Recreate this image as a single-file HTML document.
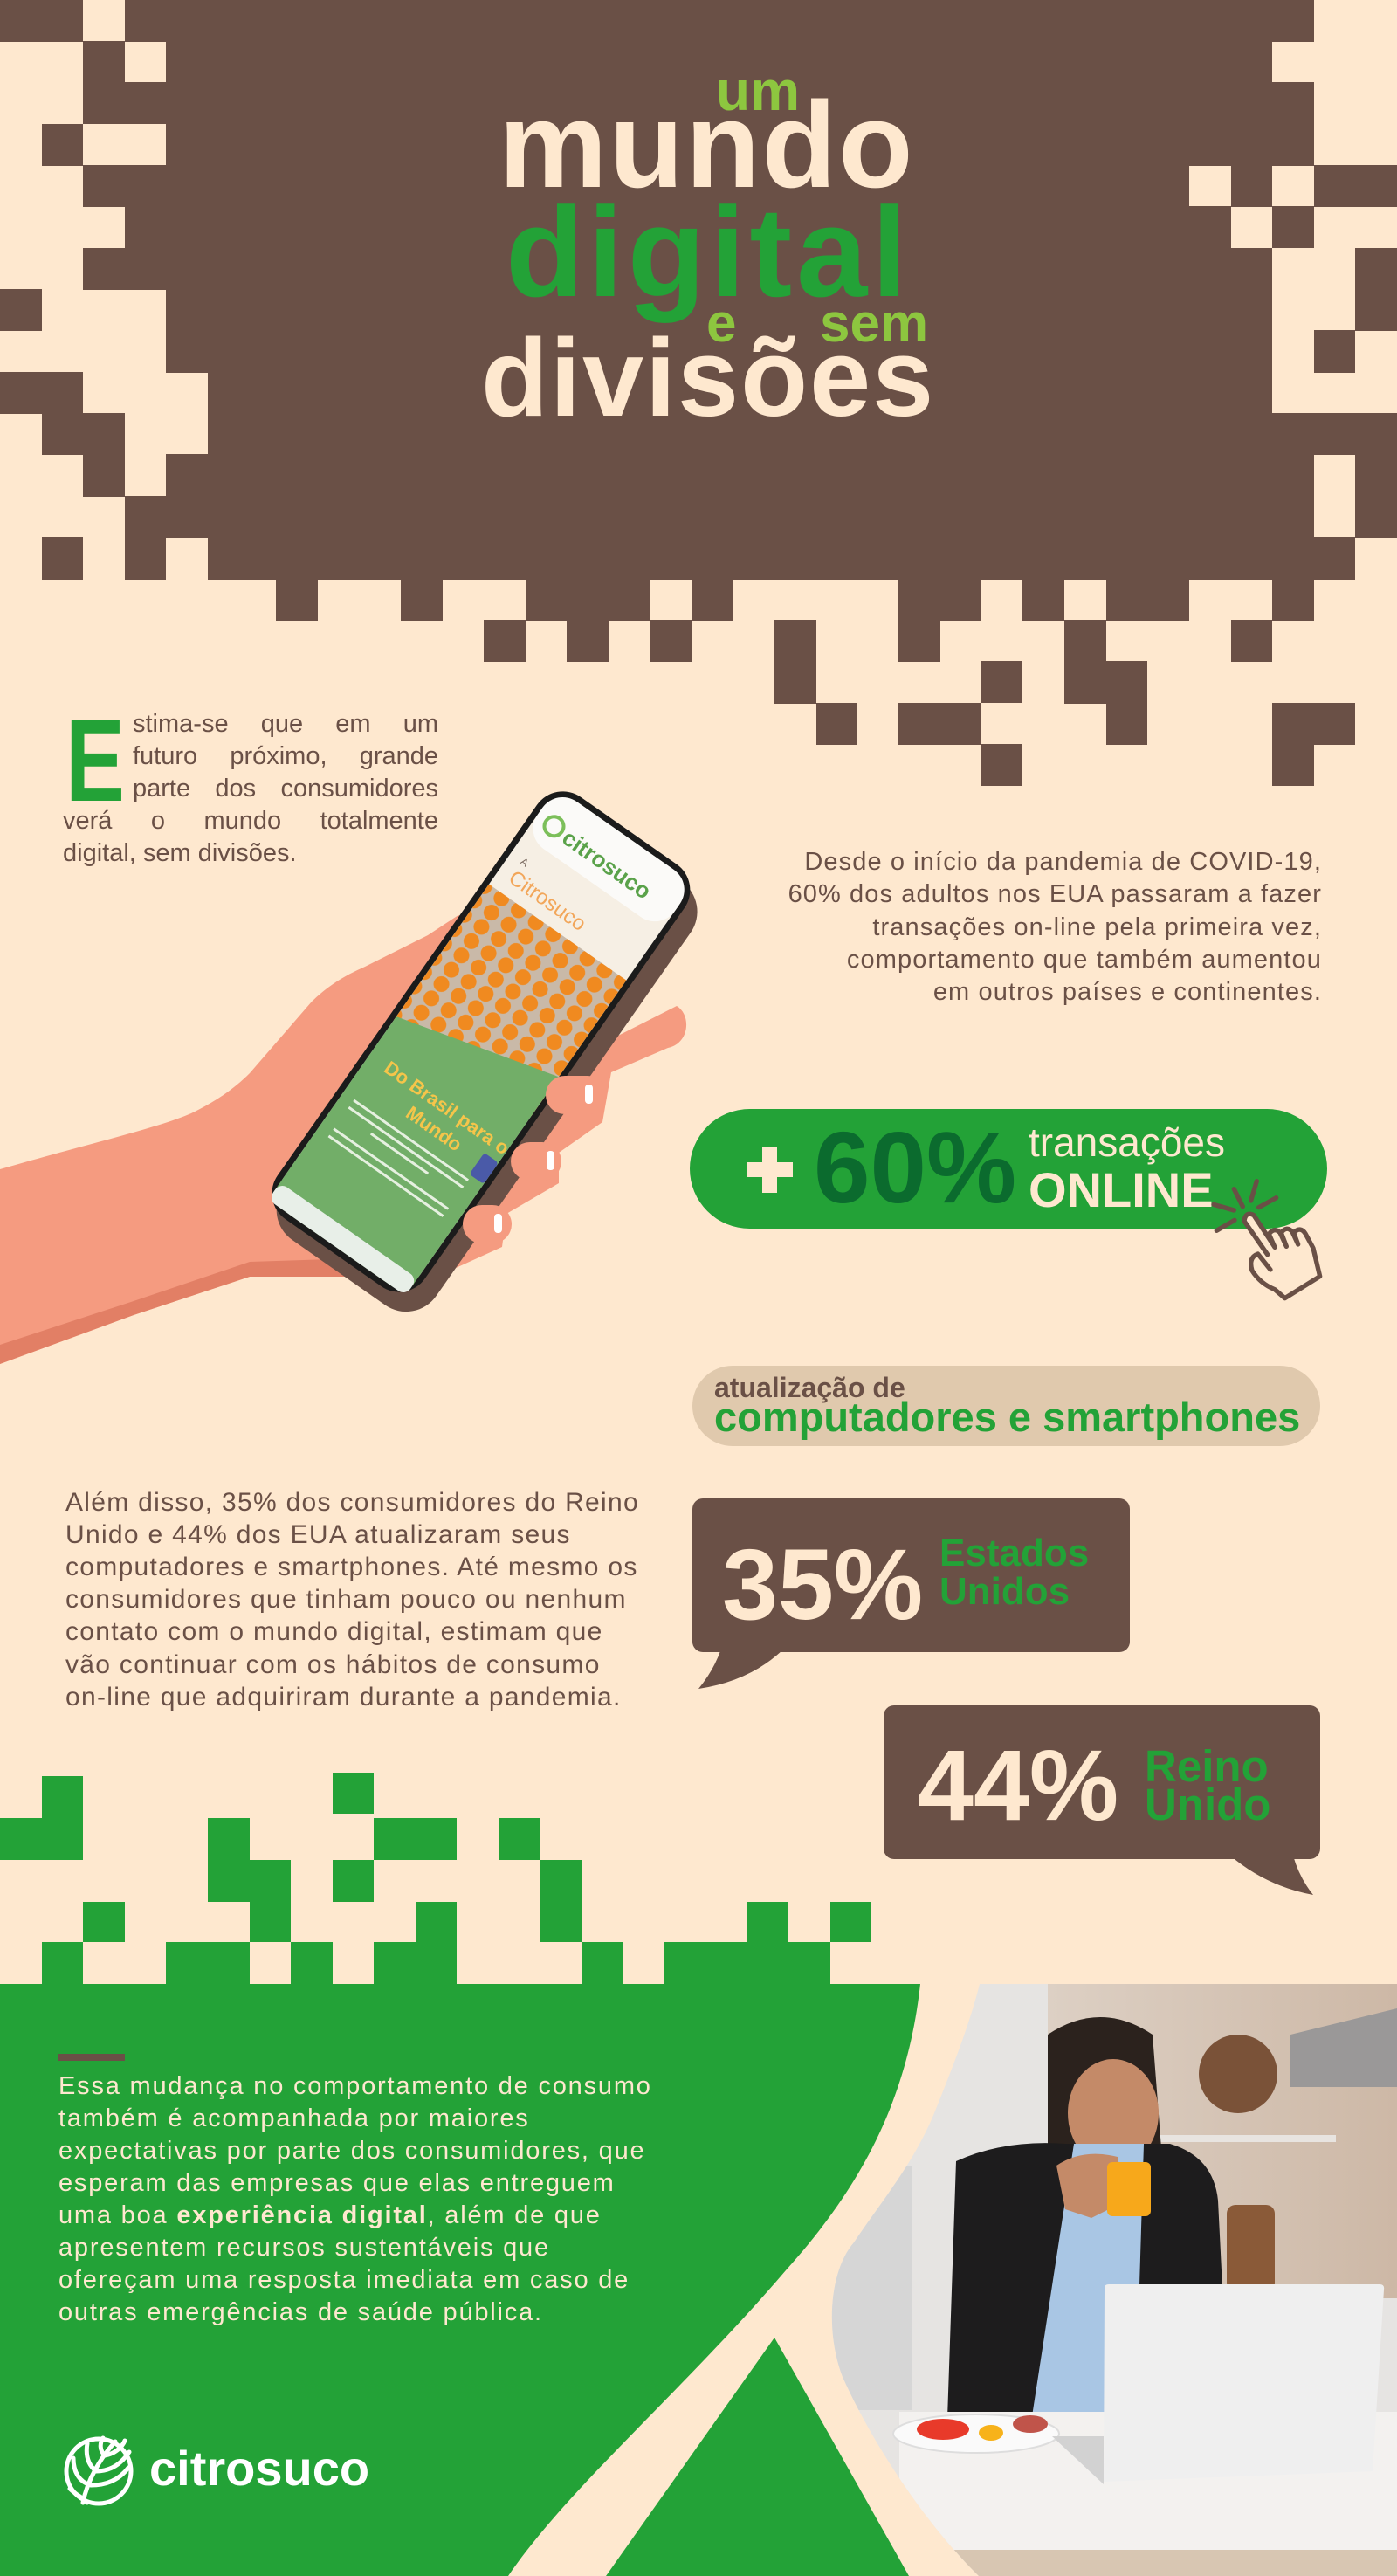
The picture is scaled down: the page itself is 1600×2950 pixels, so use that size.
<!DOCTYPE html>
<html><head><meta charset="utf-8">
<style>
*{margin:0;padding:0;box-sizing:border-box}
html,body{width:1600px;height:2950px;overflow:hidden;background:#fee8cf}
body{position:relative;font-family:"Liberation Sans",sans-serif}
.a{position:absolute;white-space:nowrap}
.t{font-weight:bold;line-height:1}
.p{font-size:29px;line-height:37px;color:#6a5046}
.j{text-align:justify;text-align-last:justify}
.q{font-size:30px;letter-spacing:1.3px}
.r{letter-spacing:1.1px}
.w{font-size:29px;line-height:37px;color:#fee8cf;letter-spacing:1.8px}
svg{position:absolute;left:0;top:0}
</style></head><body>

<svg width="1600" height="900" viewBox="0 0 1600 900">
<g fill="#6a5046">
<rect x="0" y="0" width="95" height="48"/><rect x="143" y="0" width="1362" height="48"/>
<rect x="95" y="47" width="48" height="48"/><rect x="190" y="47" width="1267" height="48"/>
<rect x="95" y="94" width="1410" height="48"/>
<rect x="48" y="142" width="47" height="48"/><rect x="190" y="142" width="1315" height="48"/>
<rect x="95" y="189" width="1267" height="48"/><rect x="1410" y="189" width="47" height="48"/><rect x="1505" y="189" width="95" height="48"/>
<rect x="143" y="236" width="1267" height="48"/><rect x="1457" y="236" width="48" height="48"/>
<rect x="95" y="284" width="1362" height="48"/><rect x="1552" y="284" width="48" height="48"/>
<rect x="0" y="331" width="48" height="48"/><rect x="190" y="331" width="1267" height="48"/><rect x="1552" y="331" width="48" height="48"/>
<rect x="190" y="378" width="1267" height="49"/><rect x="1505" y="378" width="47" height="49"/>
<rect x="0" y="426" width="95" height="48"/><rect x="238" y="426" width="1219" height="48"/>
<rect x="48" y="473" width="95" height="48"/><rect x="238" y="473" width="1362" height="48"/>
<rect x="95" y="520" width="48" height="49"/><rect x="190" y="520" width="1315" height="49"/><rect x="1552" y="520" width="48" height="49"/>
<rect x="143" y="568" width="1362" height="48"/><rect x="1552" y="568" width="48" height="48"/>
<rect x="48" y="615" width="47" height="49"/><rect x="143" y="615" width="47" height="49"/><rect x="238" y="615" width="1314" height="49"/>
<rect x="316" y="663" width="48" height="48"/><rect x="459" y="663" width="48" height="48"/><rect x="602" y="663" width="143" height="48"/><rect x="792" y="663" width="47" height="48"/><rect x="1029" y="663" width="95" height="48"/><rect x="1171" y="663" width="48" height="48"/><rect x="1267" y="663" width="95" height="48"/><rect x="1457" y="663" width="48" height="48"/>
<rect x="554" y="710" width="48" height="48"/><rect x="649" y="710" width="48" height="48"/><rect x="745" y="710" width="47" height="48"/><rect x="887" y="710" width="48" height="96"/><rect x="1029" y="710" width="48" height="48"/><rect x="1219" y="710" width="48" height="96"/><rect x="1410" y="710" width="47" height="48"/>
<rect x="1124" y="757" width="47" height="48"/><rect x="1267" y="757" width="47" height="96"/>
<rect x="935" y="805" width="47" height="48"/><rect x="1029" y="805" width="95" height="48"/><rect x="1457" y="805" width="95" height="48"/>
<rect x="1124" y="852" width="47" height="48"/><rect x="1457" y="852" width="48" height="48"/>
</g>
</svg>

<div class="a t" style="left:820px;top:72px;font-size:64px;color:#8dc63f">um</div>
<div class="a t" style="left:571px;top:96px;font-size:140px;color:#fee8cf;letter-spacing:2px">mundo</div>
<div class="a t" style="left:579px;top:216px;font-size:146px;color:#23a237;letter-spacing:5px">digital</div>
<div class="a t" style="left:809px;top:340px;font-size:62px;color:#8dc63f">e</div>
<div class="a t" style="left:939px;top:340px;font-size:62px;color:#8dc63f">sem</div>
<div class="a t" style="left:551px;top:370px;font-size:126px;color:#fee8cf;letter-spacing:2px">divisões</div>

<div class="a t" style="left:75px;top:805px;font-size:134px;color:#23a237;transform:scaleX(.76);transform-origin:left">E</div>
<div class="a p j" style="left:152px;top:811px;width:350px">stima-se que em um</div>
<div class="a p j" style="left:152px;top:848px;width:350px">futuro próximo, grande</div>
<div class="a p j" style="left:152px;top:885px;width:350px">parte dos consumidores</div>
<div class="a p j" style="left:72px;top:922px;width:430px">verá o mundo totalmente</div>
<div class="a p" style="left:72px;top:959px">digital, sem divisões.</div>

<svg width="1600" height="1700" viewBox="0 0 1600 1700">
<path d="M0,1339 C100,1310 180,1292 219,1275 C250,1260 270,1245 286,1229 L357,1147 C380,1125 400,1115 418,1107 L490,1071 L525,1048 C540,1055 538,1090 520,1117 L700,1190 L775,1152 C792,1162 790,1195 765,1200 L700,1228 L690,1285 L640,1320 L640,1355 L580,1390 L575,1428 L500,1462 L286,1462 L153,1506 L0,1562 Z" fill="#f59b80"/>
<path d="M0,1540 L153,1490 L286,1445 L440,1440 L440,1462 L286,1462 L153,1506 L0,1562 Z" fill="#e27f65"/>
<g transform="rotate(35 555 1208)">
<rect x="454" y="916" width="214" height="592" rx="42" fill="#6a5046"/>
<rect x="440" y="903" width="206" height="590" rx="36" fill="#1b1b1b"/>
<rect x="447" y="910" width="192" height="576" rx="30" fill="#f6efe4"/>
<rect x="447" y="910" width="192" height="66" rx="28" fill="#fbfaf8"/>
<circle cx="470" cy="948" r="11" fill="none" stroke="#7cbf5a" stroke-width="4"/>
<text x="486" y="958" font-family="Liberation Sans" font-size="26" fill="#5aa24a" font-weight="bold">citrosuco</text>
<text x="462" y="1005" font-family="Liberation Sans" font-size="12" fill="#7a6a60">A</text>
<text x="462" y="1030" font-family="Liberation Sans" font-size="24" fill="#f2a65a">Citrosuco</text>
<rect x="447" y="1045" width="192" height="190" fill="#c9b9a8"/>
<rect x="447" y="1045" width="192" height="190" fill="url(#or)"/>
<path d="M447,1230 L639,1180 L639,1470 Q639,1486 620,1486 L466,1486 Q447,1486 447,1467 Z" fill="#72ae68"/>
<text x="470" y="1290" font-family="Liberation Sans" font-size="22" fill="#f5c54a" font-weight="bold">Do Brasil para o</text>
<text x="520" y="1318" font-family="Liberation Sans" font-size="22" fill="#f5c54a" font-weight="bold">Mundo</text>
<g fill="#e6f0e0"><rect x="462" y="1335" width="160" height="3"/><rect x="462" y="1345" width="160" height="3"/><rect x="500" y="1355" width="80" height="3"/><rect x="462" y="1375" width="160" height="3"/><rect x="462" y="1385" width="160" height="3"/></g>
<rect x="447" y="1462" width="192" height="24" rx="10" fill="#e8efe8"/>
<rect x="619" y="1300" width="20" height="30" rx="4" fill="#4a5aa8"/>
</g>
<defs><pattern id="or" width="24" height="20" patternUnits="userSpaceOnUse"><circle cx="12" cy="10" r="9" fill="#f08a20"/></pattern></defs>
<g fill="#f59b80">
<rect x="625" y="1232" width="70" height="44" rx="22"/>
<rect x="585" y="1308" width="58" height="44" rx="22"/>
<rect x="530" y="1380" width="56" height="44" rx="22"/>
</g>
<g fill="#fff"><rect x="670" y="1242" width="9" height="22" rx="4"/><rect x="626" y="1318" width="9" height="22" rx="4"/><rect x="566" y="1390" width="9" height="22" rx="4"/></g>
</svg>

<div class="a p r" style="right:86px;top:969px;text-align:right">Desde o início da pandemia de COVID-19,</div>
<div class="a p r" style="right:86px;top:1006px;text-align:right">60% dos adultos nos EUA passaram a fazer</div>
<div class="a p r" style="right:86px;top:1044px;text-align:right">transações on-line pela primeira vez,</div>
<div class="a p r" style="right:86px;top:1081px;text-align:right">comportamento que também aumentou</div>
<div class="a p r" style="right:86px;top:1118px;text-align:right">em outros países e continentes.</div>

<div class="a" style="left:790px;top:1270px;width:730px;height:137px;border-radius:69px;background:#23a237"></div>
<div class="a" style="left:855px;top:1331px;width:53px;height:17px;background:#fee8cf"></div>
<div class="a" style="left:873px;top:1313px;width:17px;height:53px;background:#fee8cf"></div>
<div class="a t" style="left:932px;top:1279px;font-size:116px;color:#0b6b2e">60%</div>
<div class="a" style="left:1178px;top:1285px;font-size:46px;line-height:1;color:#fee8cf">transações</div>
<div class="a t" style="left:1178px;top:1335px;font-size:56px;color:#fee8cf">ONLINE</div>
<svg style="left:1380px;top:1340px" width="150" height="160" viewBox="0 0 450 480">
<g stroke="#6a5046" stroke-width="16" stroke-linecap="round" stroke-linejoin="round">
<path d="M100,65 L130,125 M178,38 L158,105 M245,95 L185,128 M30,118 L100,138 M40,208 L102,172" fill="none"/>
<path d="M215,290 L135,175 Q140,140 168,155 L240,265 L220,220 Q238,195 258,215 L280,262 L262,215 Q282,190 300,212 L320,255 L305,215 Q328,192 345,218 L372,268 L395,365 L275,440 L240,410 Q190,390 162,345 Q148,300 182,288 L225,342" fill="#fee8cf"/>
</g>
</svg>

<div class="a" style="left:793px;top:1564px;width:719px;height:92px;border-radius:46px;background:#e0c9ad"></div>
<div class="a t" style="left:818px;top:1573px;font-size:32px;color:#6a5046">atualização de</div>
<div class="a t" style="left:818px;top:1599px;font-size:47px;color:#23a237">computadores e smartphones</div>

<div class="a p q" style="left:75px;top:1702px">Além disso, 35% dos consumidores do Reino</div>
<div class="a p q" style="left:75px;top:1739px">Unido e 44% dos EUA atualizaram seus</div>
<div class="a p q" style="left:75px;top:1776px">computadores e smartphones. Até mesmo os</div>
<div class="a p q" style="left:75px;top:1813px">consumidores que tinham pouco ou nenhum</div>
<div class="a p q" style="left:75px;top:1850px">contato com o mundo digital, estimam que</div>
<div class="a p q" style="left:75px;top:1888px">vão continuar com os hábitos de consumo</div>
<div class="a p q" style="left:75px;top:1925px">on-line que adquiriram durante a pandemia.</div>

<svg width="1600" height="2300" viewBox="0 0 1600 2300">
<g fill="#6a5046">
<rect x="793" y="1716" width="501" height="176" rx="12"/>
<path d="M826,1888 L898,1888 Q860,1925 800,1934 Q818,1912 826,1888 Z"/>
<rect x="1012" y="1953" width="500" height="176" rx="12"/>
<path d="M1409,2125 L1481,2125 Q1488,2150 1504,2170 Q1450,2160 1409,2125 Z"/>
</g>
<g fill="#23a237">
<rect x="48" y="2034" width="47" height="48"/><rect x="0" y="2082" width="95" height="48"/>
<rect x="381" y="2030" width="47" height="47"/>
<rect x="238" y="2082" width="48" height="96"/><rect x="286" y="2130" width="47" height="94"/>
<rect x="428" y="2082" width="95" height="48"/><rect x="381" y="2130" width="47" height="48"/>
<rect x="571" y="2082" width="47" height="48"/><rect x="618" y="2130" width="48" height="94"/>
<rect x="95" y="2178" width="48" height="46"/>
<rect x="476" y="2178" width="47" height="94"/><rect x="428" y="2224" width="48" height="48"/>
<rect x="48" y="2224" width="47" height="48"/><rect x="190" y="2224" width="96" height="48"/>
<rect x="333" y="2224" width="48" height="48"/><rect x="666" y="2224" width="47" height="48"/>
<rect x="761" y="2224" width="190" height="48"/><rect x="856" y="2178" width="47" height="46"/>
<rect x="951" y="2178" width="47" height="46"/>
</g>
</svg>
<div class="a t" style="left:827px;top:1758px;font-size:115px;color:#fee8cf">35%</div>
<div class="a t" style="left:1076px;top:1757px;font-size:44px;color:#23a237">Estados</div>
<div class="a t" style="left:1076px;top:1801px;font-size:44px;color:#23a237">Unidos</div>
<div class="a t" style="left:1051px;top:1988px;font-size:115px;color:#fee8cf">44%</div>
<div class="a t" style="left:1311px;top:1997px;font-size:51px;color:#23a237">Reino</div>
<div class="a t" style="left:1311px;top:2041px;font-size:51px;color:#23a237">Unido</div>

<svg width="1600" height="2950" viewBox="0 0 1600 2950">
<defs>
<clipPath id="ph"><path d="M1122,2272 L1600,2272 L1600,2950 L1121,2950 C1060,2890 1000,2800 965,2722 C945,2670 950,2600 978,2568 C1010,2520 1045,2480 1070,2420 C1090,2370 1110,2320 1122,2272 Z"/></clipPath>
<linearGradient id="wd" x1="0" y1="0" x2="1" y2="0"><stop offset="0" stop-color="#ddd0c4"/><stop offset="1" stop-color="#cdb8a6"/></linearGradient>
</defs>
<path d="M0,2272 L1054,2272 C1040,2400 990,2500 900,2600 C780,2740 650,2850 582,2950 L0,2950 Z" fill="#23a237"/>
<path d="M887,2677 L694,2950 L1041,2950 Z" fill="#23a237"/>
<g clip-path="url(#ph)">
<rect x="940" y="2272" width="660" height="678" fill="#e6e4e2"/>
<rect x="1200" y="2272" width="400" height="360" fill="url(#wd)"/>
<rect x="950" y="2480" width="95" height="280" fill="#d6d6d6"/>
<path d="M1478,2330 L1600,2300 L1600,2390 L1478,2390 Z" fill="#9a9898"/>
<circle cx="1418" cy="2375" r="45" fill="#7a5238"/>
<rect x="1320" y="2445" width="210" height="8" fill="#e8e4e0"/>
<rect x="1405" y="2525" width="55" height="100" rx="10" fill="#8a5a38"/>
<rect x="1090" y="2650" width="75" height="120" rx="15" fill="#2a2a2a"/>
<path d="M1200,2330 Q1260,2290 1320,2330 L1330,2460 L1200,2460 Z" fill="#2b221d"/>
<ellipse cx="1275" cy="2420" rx="52" ry="62" fill="#c48a68"/>
<path d="M1095,2475 Q1150,2450 1220,2455 L1340,2455 Q1390,2470 1395,2520 L1400,2620 L1390,2770 L1085,2770 Z" fill="#1d1c1d"/>
<path d="M1230,2455 L1310,2455 L1300,2780 L1180,2780 Z" fill="#a9c6e4"/>
<path d="M1210,2480 Q1240,2460 1280,2470 L1290,2520 L1250,2540 L1220,2530 Z" fill="#c48a68"/>
<rect x="1268" y="2476" width="50" height="62" rx="6" fill="#f7a81b"/>
<rect x="1030" y="2762" width="600" height="170" fill="#f3f1ef"/>
<rect x="1030" y="2920" width="600" height="30" fill="#d8c6b2"/>
<ellipse cx="1118" cy="2787" rx="95" ry="22" fill="#fafafa" stroke="#ddd" stroke-width="2"/>
<ellipse cx="1080" cy="2782" rx="30" ry="12" fill="#e83a2a"/>
<ellipse cx="1135" cy="2786" rx="14" ry="9" fill="#f7b21a"/>
<ellipse cx="1180" cy="2776" rx="20" ry="10" fill="#c0544a"/>
<path d="M1265,2620 Q1265,2616 1270,2616 L1580,2616 Q1586,2616 1585,2622 L1572,2830 L1264,2842 Z" fill="#efefef"/>
<path d="M1205,2790 L1264,2790 L1264,2845 Z" fill="#d2d2d2"/>
</g>
<rect x="67" y="2352" width="76" height="8" fill="#6a5046"/>
<g fill="none" stroke="#fff" stroke-width="5" stroke-linecap="round">
<circle cx="113" cy="2830" r="37"/>
<path d="M95,2866 C100,2840 115,2815 132,2796"/>
<path d="M104,2846 C90,2842 84,2830 84,2815 M104,2846 C125,2846 138,2838 147,2826"/>
<path d="M110,2830 C100,2822 98,2810 100,2798 M110,2830 C128,2830 140,2820 148,2808"/>
<path d="M120,2812 C114,2806 114,2798 118,2792 M120,2812 C132,2810 140,2802 143,2795"/>
<path d="M100,2866 C95,2860 88,2858 80,2850"/>
</g>
</svg>

<div class="a w" style="left:67px;top:2371px">Essa mudança no comportamento de consumo</div>
<div class="a w" style="left:67px;top:2408px">também é acompanhada por maiores</div>
<div class="a w" style="left:67px;top:2445px">expectativas por parte dos consumidores, que</div>
<div class="a w" style="left:67px;top:2482px">esperam das empresas que elas entreguem</div>
<div class="a w" style="left:67px;top:2519px">uma boa <b>experiência digital</b>, além de que</div>
<div class="a w" style="left:67px;top:2556px">apresentem recursos sustentáveis que</div>
<div class="a w" style="left:67px;top:2593px">ofereçam uma resposta imediata em caso de</div>
<div class="a w" style="left:67px;top:2630px">outras emergências de saúde pública.</div>
<div class="a t" style="left:171px;top:2799px;font-size:56px;color:#fff">citrosuco</div>
</body></html>
